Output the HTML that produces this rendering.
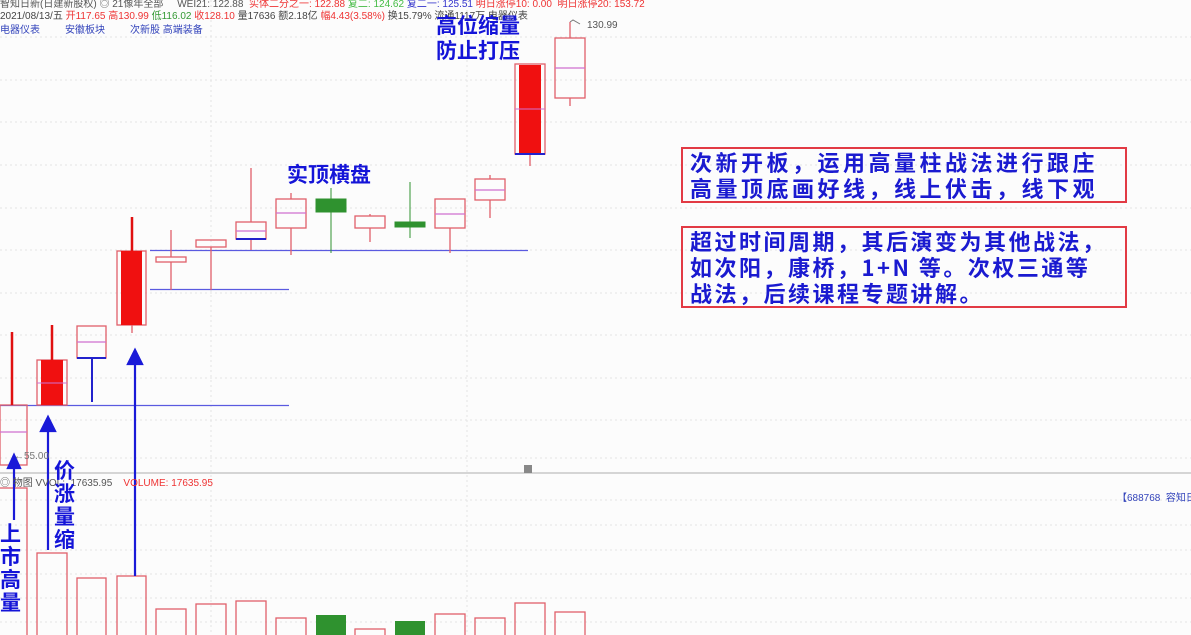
<!DOCTYPE html>
<html><head><meta charset="utf-8"><style>
body{margin:0;width:1191px;height:635px;overflow:hidden;background:#fcfcfc;font-family:"Liberation Sans","Noto Sans CJK SC",sans-serif}
svg{position:absolute;left:0;top:0}
.t{position:absolute;white-space:nowrap}
.box{position:absolute;border:2px solid #e23a44;color:#1a1ad0;font-weight:bold;font-size:22px;letter-spacing:3.5px;line-height:26px;padding:0 0 0 7px;box-sizing:border-box;font-family:"Noto Sans CJK SC",sans-serif}
.big{color:#1414d8;font-weight:bold;font-size:21px;font-family:"Noto Sans CJK SC",sans-serif}
</style></head><body>
<svg width="1191" height="635">
<g stroke="#e4e4e4" stroke-dasharray="2,3" stroke-width="1">
<line x1="0" y1="37" x2="1191" y2="37"/><line x1="0" y1="80" x2="1191" y2="80"/><line x1="0" y1="122" x2="1191" y2="122"/><line x1="0" y1="165" x2="1191" y2="165"/><line x1="0" y1="208" x2="1191" y2="208"/><line x1="0" y1="250" x2="1191" y2="250"/><line x1="0" y1="293" x2="1191" y2="293"/><line x1="0" y1="335" x2="1191" y2="335"/><line x1="0" y1="378" x2="1191" y2="378"/><line x1="0" y1="420" x2="1191" y2="420"/><line x1="0" y1="458" x2="1191" y2="458"/>
<line x1="0" y1="500" x2="1191" y2="500"/><line x1="0" y1="525" x2="1191" y2="525"/><line x1="0" y1="550" x2="1191" y2="550"/><line x1="0" y1="574" x2="1191" y2="574"/><line x1="0" y1="598" x2="1191" y2="598"/><line x1="0" y1="622" x2="1191" y2="622"/>
<line x1="211" y1="0" x2="211" y2="635"/><line x1="467" y1="0" x2="467" y2="635"/>
</g>
<line x1="0" y1="473" x2="1191" y2="473" stroke="#c8c8c8" stroke-width="1.5"/>
<g stroke="#5a5ae0" stroke-width="1.2">
<line x1="0" y1="405.5" x2="289" y2="405.5"/><line x1="150" y1="289.5" x2="289" y2="289.5"/><line x1="150" y1="250.5" x2="528" y2="250.5"/>
</g>
<g stroke="#e0606a" stroke-width="1.3" fill="none">
<rect x="0" y="405" width="27" height="60"/><line x1="0" y1="432" x2="27" y2="432" stroke="#d070d0"/>
<rect x="37" y="360" width="30" height="45"/>
<rect x="77" y="326" width="29" height="32"/><line x1="77" y1="342" x2="106" y2="342" stroke="#d070d0"/>
<rect x="117" y="251" width="29" height="74"/><line x1="132" y1="325" x2="132" y2="333"/>
<rect x="156" y="257" width="30" height="5"/><line x1="171" y1="230" x2="171" y2="257"/><line x1="171" y1="262" x2="171" y2="290"/>
<rect x="196" y="240" width="30" height="7"/><line x1="211" y1="247" x2="211" y2="290"/>
<rect x="236" y="222" width="30" height="17"/><line x1="251" y1="168" x2="251" y2="222"/><line x1="251" y1="239" x2="251" y2="250"/><line x1="236" y1="231" x2="266" y2="231" stroke="#d070d0"/>
<rect x="276" y="199" width="30" height="29"/><line x1="291" y1="193" x2="291" y2="199"/><line x1="291" y1="228" x2="291" y2="255"/><line x1="276" y1="213" x2="306" y2="213" stroke="#d070d0"/>
<rect x="355" y="216" width="30" height="12"/><line x1="370" y1="214" x2="370" y2="216"/><line x1="370" y1="228" x2="370" y2="242"/>
<rect x="435" y="199" width="30" height="29"/><line x1="450" y1="228" x2="450" y2="253"/><line x1="435" y1="214" x2="465" y2="214" stroke="#d070d0"/>
<rect x="475" y="179" width="30" height="21"/><line x1="490" y1="175" x2="490" y2="179"/><line x1="490" y1="200" x2="490" y2="218"/><line x1="475" y1="190" x2="505" y2="190" stroke="#d070d0"/>
<rect x="515" y="64" width="30" height="90"/><line x1="530" y1="154" x2="530" y2="166"/>
<rect x="555" y="38" width="30" height="60"/><line x1="570" y1="22" x2="570" y2="38"/><line x1="570" y1="98" x2="570" y2="106"/><line x1="555" y1="68" x2="585" y2="68" stroke="#d070d0"/>
</g>
<g fill="#f01010">
<rect x="41" y="360" width="22" height="45"/><rect x="121" y="251" width="21" height="74"/><rect x="519" y="65" width="22" height="89"/>
</g>
<g stroke="#e01010" stroke-width="2.5">
<line x1="12" y1="332" x2="12" y2="405"/><line x1="52" y1="325" x2="52" y2="360"/><line x1="132" y1="217" x2="132" y2="251"/>
</g>
<g stroke="#d070d0"><line x1="37" y1="383" x2="67" y2="383"/><line x1="515" y1="109" x2="545" y2="109"/></g>
<g stroke="#2222cc" stroke-width="2"><line x1="77" y1="358" x2="106" y2="358"/><line x1="92" y1="358" x2="92" y2="402"/><line x1="236" y1="239" x2="266" y2="239"/><line x1="515" y1="154" x2="545" y2="154"/></g>
<g fill="#2f922f" stroke="#2f922f"><rect x="316" y="199" width="30" height="13"/><line x1="331" y1="188" x2="331" y2="253"/><rect x="395" y="222" width="30" height="5"/><line x1="410" y1="182" x2="410" y2="238"/></g>
<polyline points="570,22 573,20 580,24" fill="none" stroke="#777"/>
<g stroke="#e0606a" stroke-width="1.3" fill="none">
<rect x="-1" y="488" width="28" height="150"/><rect x="37" y="553" width="30" height="90"/><rect x="77" y="578" width="29" height="60"/><rect x="117" y="576" width="29" height="60"/><rect x="156" y="609" width="30" height="30"/><rect x="196" y="604" width="30" height="35"/><rect x="236" y="601" width="30" height="35"/><rect x="276" y="618" width="30" height="20"/><rect x="355" y="629" width="30" height="10"/><rect x="435" y="614" width="30" height="25"/><rect x="475" y="618" width="30" height="20"/><rect x="515" y="603" width="30" height="35"/><rect x="555" y="612" width="30" height="25"/>
</g>
<g fill="#2f922f"><rect x="316" y="615" width="30" height="20"/><rect x="395" y="621" width="30" height="14"/></g>
<g stroke="#1a1ad8" stroke-width="2.2" fill="#1a1ad8">
<line x1="14" y1="520" x2="14" y2="465"/><polygon points="14,455 8,468 20,468"/>
<line x1="48" y1="550" x2="48" y2="428"/><polygon points="48,417 41,431 55,431"/>
<line x1="135" y1="576" x2="135" y2="360"/><polygon points="135,350 128,364 142,364"/>
</g>
<rect x="524" y="465" width="8" height="8" fill="#888"/>
</svg>
<div class="t" style="left:0;top:-5px;font-size:10px;color:#555">智知日新(日建新股权) ◎ 21像年全部 &nbsp; &nbsp; WEI21: 122.88 &nbsp;<span style="color:#e33">实体二分之一: 122.88</span> <span style="color:#4b4">复二: 124.62</span> <span style="color:#33c">复二一: 125.51</span> <span style="color:#e33">明日涨停10: 0.00 &nbsp;明日涨停20: 153.72</span></div>
<div class="t" style="left:0;top:7px;font-size:10px;color:#444">2021/08/13/五 <span style="color:#e33">开117.65 高130.99</span> <span style="color:#393">低116.02</span> <span style="color:#e33">收128.10</span> 量17636 额2.18亿 <span style="color:#e33">幅4.43(3.58%)</span> 换15.79% 流通1117万 电器仪表</div>
<div class="t" style="left:0;top:21px;font-size:10px;color:#3344bb">电器仪表 &nbsp; &nbsp; &nbsp; &nbsp; 安徽板块 &nbsp; &nbsp; &nbsp; &nbsp; 次新股 高端装备</div>
<div class="t" style="left:587px;top:20px;font-size:10px;color:#555">130.99</div>
<div class="t" style="left:14px;top:451px;font-size:10px;color:#777">←55.00</div>
<div class="t" style="left:0;top:474px;font-size:10px;color:#555">◎ 物图 VVOL: &nbsp;17635.95 &nbsp; &nbsp;<span style="color:#e33">VOLUME: 17635.95</span></div>
<div class="t" style="left:1117px;top:489px;font-size:10px;color:#3344bb">【688768 &nbsp;容知日</div>
<div class="t big" style="left:436px;top:13px;line-height:25px">高位缩量<br>防止打压</div>
<div class="t big" style="left:287px;top:159px">实顶横盘</div>
<div class="t big" style="left:54px;top:459px;line-height:23px;width:22px;white-space:normal">价涨量缩</div>
<div class="t big" style="left:0;top:522px;line-height:23px;width:20px;white-space:normal">上市高量</div>
<div class="box" style="left:681px;top:147px;width:446px;height:56px">次新开板，运用高量柱战法进行跟庄<br>高量顶底画好线，线上伏击，线下观</div>
<div class="box" style="left:681px;top:226px;width:446px;height:82px;letter-spacing:2.5px">超过时间周期，其后演变为其他战法，<br>如次阳，康桥，1+N 等。次权三通等<br>战法，后续课程专题讲解。</div>
</body></html>
